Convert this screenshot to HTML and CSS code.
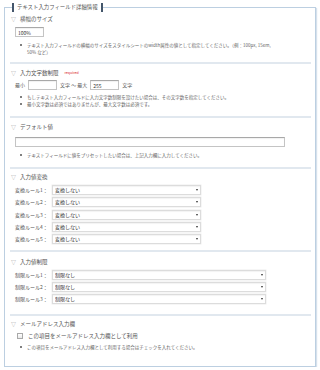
FILE: index.html
```html
<!DOCTYPE html>
<html lang="ja">
<head>
<meta charset="utf-8">
<title>テキスト入力フィールド詳細情報</title>
<link rel="stylesheet" href="styles.css">
</head>
<body>
<fieldset class="panel">
  <legend class="panel-title">テキスト入力フィールド詳細情報</legend>

  <section class="sec sec--size">
    <h3 class="sec-head"><span class="tri">▽</span>横幅のサイズ</h3>
    <div class="sec-body">
      <div class="field field--size"><input class="txt txt--size" type="text" value="100%"></div>
      <ul class="notes notes--size">
        <li>テキスト入力フィールドの横幅のサイズをスタイルシートのwidth属性の値として指定してください。（例：100px, 15em,<br>50% など）</li>
      </ul>
    </div>
  </section>

  <section class="sec sec--length">
    <h3 class="sec-head"><span class="tri">▽</span>入力文字数制限<span class="req">required</span></h3>
    <div class="sec-body">
      <div class="range">
        <span class="range-label">最小</span>
        <input class="txt txt--num" type="text" value="">
        <span class="range-label">文字 ～ 最大</span>
        <input class="txt txt--num" type="text" value="255">
        <span class="range-label">文字</span>
      </div>
      <ul class="notes notes--length">
        <li>もしテキスト入力フィールドに入力文字数制限を設けたい場合は、その文字数を指定してください。</li>
        <li>最小文字数は必須ではありませんが、最大文字数は必須です。</li>
      </ul>
    </div>
  </section>

  <section class="sec sec--default">
    <h3 class="sec-head"><span class="tri">▽</span>デフォルト値</h3>
    <div class="sec-body">
      <div class="field field--default"><input class="txt txt--full" type="text" value=""></div>
      <ul class="notes notes--default">
        <li>テキストフィールドに値をプリセットしたい場合は、上記入力欄に入力してください。</li>
      </ul>
    </div>
  </section>

  <section class="sec sec--convert">
    <h3 class="sec-head"><span class="tri">▽</span>入力値変換</h3>
    <div class="sec-body">
      <div class="rules rules--convert">
        <div class="rule"><label class="rule-label">変換ルール1：</label><div class="sel sel--convert"><select><option>変換しない</option></select></div></div>
        <div class="rule"><label class="rule-label">変換ルール2：</label><div class="sel sel--convert"><select><option>変換しない</option></select></div></div>
        <div class="rule"><label class="rule-label">変換ルール3：</label><div class="sel sel--convert"><select><option>変換しない</option></select></div></div>
        <div class="rule"><label class="rule-label">変換ルール4：</label><div class="sel sel--convert"><select><option>変換しない</option></select></div></div>
        <div class="rule"><label class="rule-label">変換ルール5：</label><div class="sel sel--convert"><select><option>変換しない</option></select></div></div>
      </div>
    </div>
  </section>

  <section class="sec sec--limit">
    <h3 class="sec-head"><span class="tri">▽</span>入力値制限</h3>
    <div class="sec-body">
      <div class="rules rules--limit">
        <div class="rule"><label class="rule-label">制限ルール1：</label><div class="sel sel--limit"><select><option>制限なし</option></select></div></div>
        <div class="rule"><label class="rule-label">制限ルール2：</label><div class="sel sel--limit"><select><option>制限なし</option></select></div></div>
        <div class="rule"><label class="rule-label">制限ルール3：</label><div class="sel sel--limit"><select><option>制限なし</option></select></div></div>
      </div>
    </div>
  </section>

  <section class="sec sec--mail">
    <h3 class="sec-head"><span class="tri">▽</span>メールアドレス入力欄</h3>
    <div class="sec-body">
      <label class="check"><input class="check-box" type="checkbox"><span>この項目をメールアドレス入力欄として利用</span></label>
      <ul class="notes notes--mail">
        <li>この項目をメールアドレス入力欄として利用する場合はチェックを入れてください。</li>
      </ul>
    </div>
  </section>
</fieldset>
</body>
</html>
```

FILE: styles.css
```css
html, body {
  margin: 0;
}

body {
  padding: 3px 4px 0;
  background: #ffffff;
  color: #555555;
  font-family: "Noto Sans CJK JP", "Noto Sans", sans-serif;
}

.panel {
  margin: 0;
  padding: 0 4px 15.5px 5px;
  border: 1px solid #bccfe1;
  box-shadow: 1px 1px 1px #d6e1ec;
  min-width: 0;
}

.panel-title {
  margin-left: 2px;
  padding: 0 3px;
  border-left: 2px solid #44566b;
  border-right: 2px solid #44566b;
  font-size: 5.4px;
  line-height: 9px;
  color: #555555;
}

.sec {
  padding: 4px 0 8.5px;
  border-bottom: 2px solid #e1e8ef;
}

.sec--size { padding-top: 2px; padding-bottom: 6.5px; }
.sec--length { padding-top: 4px; padding-bottom: 8.5px; }
.sec--default { padding-top: 4px; padding-bottom: 8.5px; }
.sec--convert { padding-top: 3px; padding-bottom: 6px; }
.sec--limit { padding-top: 5px; padding-bottom: 10px; }
.sec--mail { padding-top: 3px; padding-bottom: 0; border-bottom: 0; }

.sec-head {
  margin: 0;
  display: flex;
  align-items: center;
  padding-left: 1px;
  font-size: 5.5px;
  line-height: 10px;
  font-weight: normal;
  color: #555555;
}

.tri {
  width: 5px;
  margin-right: 4px;
  font-size: 5px;
  color: #9a9a9a;
}

.req {
  margin-left: 6px;
  font-size: 3.6px;
  color: #d9262b;
}

.sec-body {
  padding-left: 5px;
}

.field--size { margin-top: 3px; display: flex; }
.field--default { margin-top: 5px; display: flex; }

.txt {
  box-sizing: border-box;
  height: 10px;
  margin: 0;
  padding: 0 2px;
  border: 1px solid #c4c4c4;
  border-top-color: #a8a8a8;
  background: #ffffff;
  box-shadow: inset 0 1px 1px rgba(0, 0, 0, 0.06);
  font-family: "Noto Sans CJK JP", "Noto Sans", sans-serif;
  font-size: 5px;
  color: #333333;
  outline: none;
}

.txt--size { width: 29px; }
.txt--num { width: 29px; }
.txt--full { width: 270px; }

.range {
  margin-top: 2px;
  display: flex;
  align-items: center;
  gap: 3px;
  height: 10px;
}

.range-label {
  font-size: 5px;
  line-height: 10px;
  color: #555555;
  white-space: pre;
}

.notes {
  list-style: none;
  margin: 4.5px 0 0;
  padding: 0 0 0 12px;
  font-size: 4.5px;
  line-height: 7px;
  color: #666666;
}

.notes li {
  position: relative;
}

.notes li::before {
  content: "";
  position: absolute;
  left: -7px;
  top: 2.6px;
  width: 2px;
  height: 2px;
  border-radius: 50%;
  background: #555555;
}

.notes--length { margin-top: 3.5px; }
.notes--default { margin-top: 4.5px; }
.notes--mail { margin-top: 3.5px; }

.rules {
  display: flex;
  flex-direction: column;
}

.rules--convert { margin-top: 3px; gap: 2.3px; }
.rules--limit { margin-top: 2.5px; gap: 1.5px; }

.rule {
  display: flex;
  align-items: center;
}

.rule-label {
  width: 37px;
  font-size: 5px;
  line-height: 10px;
  color: #555555;
  white-space: nowrap;
}

.sel {
  position: relative;
  display: flex;
}

.sel select {
  appearance: none;
  -webkit-appearance: none;
  box-sizing: border-box;
  width: 100%;
  height: 10px;
  margin: 0;
  padding: 0 2px;
  border: 1px solid #dcdcdc;
  border-radius: 0;
  background: #ffffff;
  box-shadow: inset 0 1px 1px rgba(0, 0, 0, 0.05), 0 0 0 0.5px #eeeeee;
  font-family: "Noto Sans CJK JP", "Noto Sans", sans-serif;
  font-size: 5px;
  line-height: 8px;
  color: #333333;
  outline: none;
}

.rules--limit .sel select { height: 10.5px; }

.sel::after {
  content: "";
  position: absolute;
  right: 3px;
  top: 4px;
  border-top: 2px solid #333333;
  border-left: 1.5px solid transparent;
  border-right: 1.5px solid transparent;
}

.sel--convert { width: 149px; }
.sel--limit { width: 214px; }

.check {
  margin-top: 3px;
  display: flex;
  align-items: center;
  gap: 5px;
  padding-left: 2px;
  height: 8px;
  font-size: 5.5px;
  line-height: 8px;
  color: #555555;
}

.check-box {
  appearance: none;
  -webkit-appearance: none;
  box-sizing: border-box;
  width: 6px;
  height: 6px;
  margin: 0;
  border: 1px solid #a9a9a9;
  background: linear-gradient(#ffffff, #e9e9e9);
}
```
